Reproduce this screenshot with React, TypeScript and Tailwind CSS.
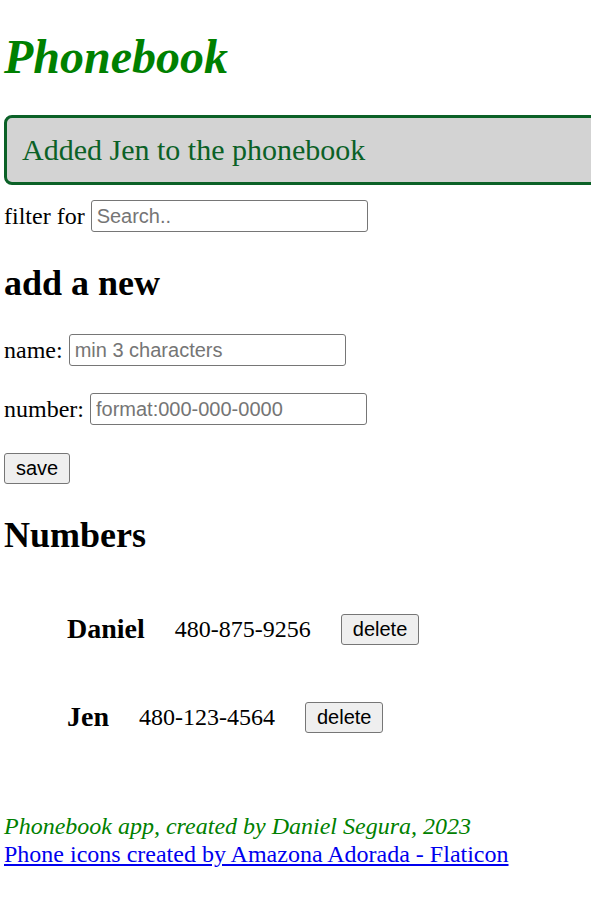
import React from "react";

const people = [
  { name: "Daniel", number: "480-875-9256" },
  { name: "Jen", number: "480-123-4564" },
];

const inputCls =
  "w-[277px] h-[32px] align-middle bg-white border border-[#767676] rounded-[3px] px-[5px] text-[20px] font-['Liberation_Sans',Arial,sans-serif] text-black placeholder:text-[#757575] outline-none";

const buttonCls =
  "h-[31px] px-[11px] bg-[#efefef] border border-[#767676] rounded-[3px] text-[20px] leading-[23px] font-['Liberation_Sans',Arial,sans-serif] text-black";

export default function App() {
  return (
    <div className="min-h-[898px] overflow-hidden bg-white pl-[4px] pt-[30px] text-[24px] leading-[28px] text-black font-['Liberation_Serif','Times_New_Roman',serif]">
      {/* Header */}
      <h1 className="text-[48px] leading-[53px] font-bold italic text-[#008000]">
        Phonebook
      </h1>

      {/* Notification */}
      <div className="mt-[32px] w-[640px] border-[3px] border-[#0b6127] rounded-[8px] bg-[#d3d3d3] px-[15px] py-[15px] text-[30px] leading-[34px] text-[#0b6127]">
        Added Jen to the phonebook
      </div>

      {/* Filter */}
      <div className="mt-[14px] h-[34px] flex items-center">
        filter for&nbsp;
        <input className={inputCls} placeholder="Search.." />
      </div>

      {/* Form */}
      <h2 className="mt-[30px] text-[36px] leading-[40px] font-bold">add a new</h2>
      <form className="mt-[30px]" onSubmit={(e) => e.preventDefault()}>
        <div className="h-[34px] flex items-center">
          name:&nbsp;
          <input className={inputCls} placeholder="min 3 characters" />
        </div>
        <div className="mt-[25px] h-[34px] flex items-center">
          number:&nbsp;
          <input className={inputCls} placeholder="format:000-000-0000" />
        </div>
        <div className="mt-[25px] h-[34px] flex items-center">
          <button type="submit" className={buttonCls}>
            save
          </button>
        </div>
      </form>

      {/* Numbers */}
      <h2 className="mt-[30px] text-[36px] leading-[40px] font-bold">Numbers</h2>
      <ul className="mt-[30px] pl-[63px]">
        {people.map((p) => (
          <li key={p.name} className="flex items-center gap-[30px]">
            <h3 className="my-[28px] text-[28px] leading-[32px] font-bold">{p.name}</h3>
            <span>{p.number}</span>
            <button className={buttonCls}>delete</button>
          </li>
        ))}
      </ul>

      {/* Footer */}
      <div className="mt-[51px]">
        <p className="italic text-[#008000]">Phonebook app, created by Daniel Segura, 2023</p>
        <a href="#" className="text-[#0000ee] underline">
          Phone icons created by Amazona Adorada - Flaticon
        </a>
      </div>
    </div>
  );
}
